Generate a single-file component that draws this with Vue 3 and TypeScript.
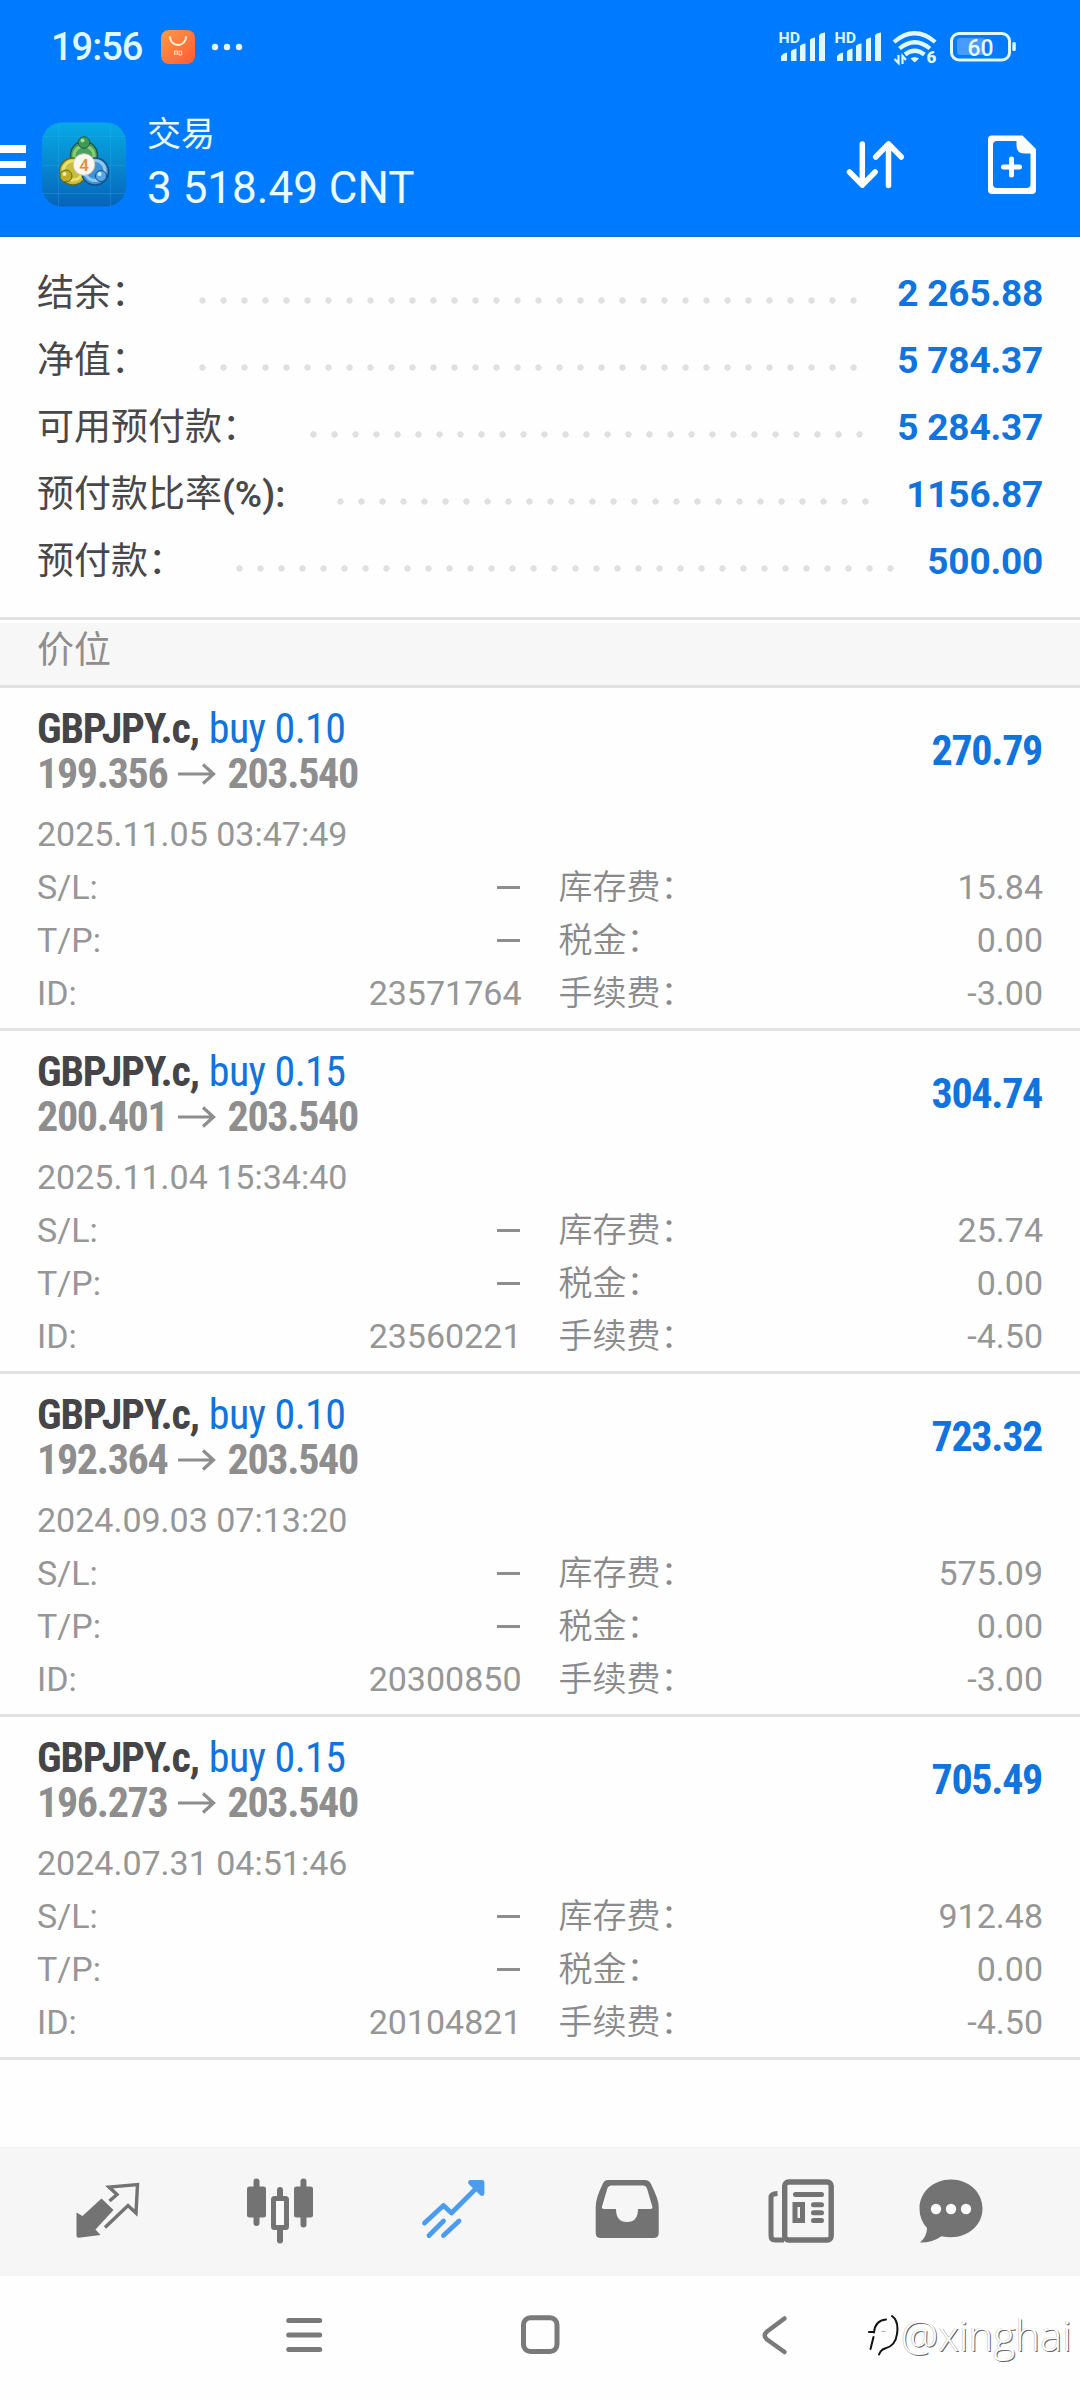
<script setup lang="ts">
interface SummaryRow {
  label: string
  suffix?: string
  value: string
  dots: number
  gap: number
}

interface Position {
  id: string
  volume: string
  open: string
  current: string
  profit: string
  time: string
  swap: string
  tax: string
  fee: string
}

const symbol = 'GBPJPY.c,'

// gap: width of the value column after the leader dots
const summary: SummaryRow[] = [
  { label: '结余：', value: '2 265.88', dots: 32, gap: 179 },
  { label: '净值：', value: '5 784.37', dots: 32, gap: 179 },
  { label: '可用预付款：', value: '5 284.37', dots: 27, gap: 173 },
  { label: '预付款比率', suffix: '(%):', value: '1156.87', dots: 26, gap: 167 },
  { label: '预付款：', value: '500.00', dots: 32, gap: 142 },
]

const positions: Position[] = [
  { id: '23571764', volume: '0.10', open: '199.356', current: '203.540', profit: '270.79', time: '2025.11.05 03:47:49', swap: '15.84', tax: '0.00', fee: '-3.00' },
  { id: '23560221', volume: '0.15', open: '200.401', current: '203.540', profit: '304.74', time: '2025.11.04 15:34:40', swap: '25.74', tax: '0.00', fee: '-4.50' },
  { id: '20300850', volume: '0.10', open: '192.364', current: '203.540', profit: '723.32', time: '2024.09.03 07:13:20', swap: '575.09', tax: '0.00', fee: '-3.00' },
  { id: '20104821', volume: '0.15', open: '196.273', current: '203.540', profit: '705.49', time: '2024.07.31 04:51:46', swap: '912.48', tax: '0.00', fee: '-4.50' },
]
</script>

<template>
  <div class="screen">
    <header class="header">
      <div class="status">
        <span class="clock">19:56</span>
        <svg class="shop" width="34" height="34" viewBox="0 0 34 34">
          <defs>
            <linearGradient id="shopFill" x1="0" y1="0" x2="1" y2="1">
              <stop offset="0" stop-color="#ff9a45" />
              <stop offset="1" stop-color="#ff5a36" />
            </linearGradient>
          </defs>
          <rect width="34" height="34" rx="8" fill="url(#shopFill)" />
          <path d="M9 7a8 8 0 0 0 16 0" fill="none" stroke="#fff0dc" stroke-width="2" stroke-linecap="round" />
          <path d="M13.500 25v-4h3v4M18 21h2.600v4H18zM15 22.500v2.500" fill="none" stroke="#ffd9c4" stroke-width="1" />
        </svg>
        <svg class="more" width="32" height="10" viewBox="0 0 32 10" fill="#dff8ff">
          <circle cx="4" cy="5" r="3.200" /><circle cx="16" cy="5" r="3.200" /><circle cx="28" cy="5" r="3.200" />
        </svg>
        <div class="radio">
          <svg v-for="n in 2" :key="n" class="signal" width="56" height="34" viewBox="778 30 56 34" fill="#dff8ff">
            <text x="778.500" y="43" font-size="15" font-weight="700" textLength="21.500" lengthAdjust="spacingAndGlyphs">HD</text>
            <path d="M781 61v-4.500q1-3 6-4v8.500zM791 61V51.500q1-2 5.500-3V61zM800 61V46q1-2 5.500-2.500V61zM810 61V40q1-2 5-2.500V61zM819 61V35.500q1-2.500 6-3V61z" />
          </svg>
          <svg class="wifi" width="48" height="40" viewBox="892 27 48 40" fill="none" stroke="#dff8ff" stroke-width="4.200">
            <path d="M894 42q20.600-17.500 41.200 0" />
            <path d="M899.500 48.500q15.200-12.500 30.400 0" />
            <path d="M905 54.500q9.700-7.500 19.400 0" />
            <path d="M910.500 58.500q4.200-3 8.400 0l-4.200 4z" fill="#dff8ff" stroke="none" />
            <path d="M898.500 55v8l-4-4M902.500 64v-8l3.500 4" stroke-width="2.200" />
            <text x="926.500" y="63" font-size="17" font-weight="900" fill="#dff8ff" stroke="none">6</text>
          </svg>
          <svg class="battery" width="68" height="32" viewBox="949 31 68 32">
            <rect x="957" y="38" width="28" height="17" rx="3" fill="#489cff" />
            <rect x="951.500" y="33.500" width="58" height="26.500" rx="7.500" fill="none" stroke="#dff8ff" stroke-width="3" />
            <rect x="1012.300" y="42" width="3.500" height="9" rx="1.500" fill="#dff8ff" />
            <text x="980.500" y="55.500" text-anchor="middle" font-size="24" font-weight="500" textLength="26" lengthAdjust="spacingAndGlyphs" fill="#eafaff">60</text>
          </svg>
        </div>
      </div>

      <div class="appbar">
        <div class="burger"><i /><i /><i /></div>
        <svg class="logo" width="86" height="86" viewBox="0 0 86 86">
          <defs>
            <linearGradient id="tile" x1="0" y1="0" x2="0" y2="1">
              <stop offset="0" stop-color="#06a9e6" />
              <stop offset="0.5" stop-color="#0788cf" />
              <stop offset="1" stop-color="#0763ba" />
            </linearGradient>
          </defs>
          <rect x="1" y="0.500" width="84" height="84" rx="20" fill="url(#tile)" />
          <path d="M1 14.500h84M1 43.500h84M1 71.500h84M17.500 1v84M69.500 1v84" stroke="#35b0e0" stroke-opacity="0.300" fill="none" />
          <circle cx="43" cy="33" r="13.500" fill="#4aa060" stroke="#1b5b4a" stroke-width="1.500" />
          <circle cx="43" cy="34" r="10" fill="none" stroke="#8ccb70" stroke-width="3" />
          <circle cx="32" cy="49.500" r="13.500" fill="#c9bd3c" stroke="#5c6a2a" stroke-width="1.500" />
          <circle cx="32" cy="48.500" r="9.500" fill="none" stroke="#eadf6a" stroke-width="3" />
          <circle cx="54" cy="49.500" r="13.500" fill="#3f92d6" stroke="#12508c" stroke-width="1.500" />
          <circle cx="54" cy="48.500" r="10" fill="none" stroke="#8ec8ef" stroke-width="3" />
          <circle cx="43" cy="20.500" r="5.800" fill="#3d9a52" stroke="#1b5b4a" />
          <circle cx="41.500" cy="18.500" r="2" fill="#a3dca0" />
          <circle cx="25" cy="54" r="6" fill="#c2ad25" stroke="#5c6a2a" />
          <circle cx="23.500" cy="52" r="2" fill="#f3edae" />
          <circle cx="60" cy="54" r="5.500" fill="#58a8e6" stroke="#12508c" />
          <circle cx="58.500" cy="52" r="2" fill="#d6efff" />
          <circle cx="43" cy="42.500" r="10.800" fill="#fbf7ef" stroke="#c5c4b6" />
          <text x="43" y="48.500" text-anchor="middle" font-size="17" font-weight="500" fill="#ee8a35">4</text>
        </svg>
        <div class="heading">
          <div class="title">交易</div>
          <div class="equity">3 518.49 CNT</div>
        </div>
        <svg class="sort" width="62" height="52" viewBox="844 138 62 52" fill="none" stroke="#fff" stroke-width="5.500" stroke-linecap="round" stroke-linejoin="round">
          <path d="M862.300 143v41M849.500 171l12.800 13.200 12.800-13.200" />
          <path d="M888.500 184.500v-41.500M875.700 156l12.800-13.200 12.800 13.200" />
        </svg>
        <svg class="doc" width="50" height="60" viewBox="987 134 50 60">
          <path fill="#fff" fill-rule="evenodd" d="M992 134.500h30.500l13.500 13.500v41q0 4-4 4h-40q-4 0-4-4v-50.500q0-4 4-4zM997 140q-4 0-4 4v39q0 4 4 4h29.500q4 0 4-4v-30.500h-6q-8 0-8-8V140z" />
          <path d="M1011.500 158v16M1003.500 166h16" stroke="#fff" stroke-width="5" stroke-linecap="round" />
        </svg>
      </div>
    </header>

    <section class="summary">
      <div v-for="row in summary" :key="row.label" class="sum-row">
        <span class="sum-label">{{ row.label }}<b v-if="row.suffix">{{ row.suffix }}</b></span>
        <span class="leader" :style="{ width: row.dots * 21 + 'px' }" />
        <span class="sum-value" :style="{ width: row.gap + 'px' }">{{ row.value }}</span>
      </div>
    </section>

    <div class="section-title"><span>价位</span></div>

    <article v-for="p in positions" :key="p.id" class="position">
      <div class="top">
        <div>
          <div class="name"><b>{{ symbol }}</b><span class="side">buy {{ p.volume }}</span></div>
          <div class="prices">
            <span>{{ p.open }}</span>
            <svg width="38" height="24" viewBox="0 0 38 24" fill="none" stroke="#8e8e8e" stroke-width="3.200">
              <path d="M0 12h36M25 2.500L35.500 12 25 21.500" />
            </svg>
            <span>{{ p.current }}</span>
          </div>
        </div>
        <div class="profit">{{ p.profit }}</div>
      </div>
      <div class="time">{{ p.time }}</div>
      <div class="details">
        <div><span>S/L:</span><i class="dash" /></div>
        <div><span class="cjk">库存费：</span><span>{{ p.swap }}</span></div>
        <div><span>T/P:</span><i class="dash" /></div>
        <div><span class="cjk">税金：</span><span>{{ p.tax }}</span></div>
        <div><span>ID:</span><span>{{ p.id }}</span></div>
        <div><span class="cjk">手续费：</span><span>{{ p.fee }}</span></div>
      </div>
    </article>

    <div class="spacer" />

    <nav class="tabs">
      <svg viewBox="75 2179 66 66" fill="#737373">
        <path d="M76.500 2213.500l6 3.500 19-17.500 12 11.500-18 19.500 5 5.500-22 2.800q-2 0-2-2z" />
        <path d="M109.500 2202l7.500-6.500-8-7.500 28.500-2.500-1.500 28.500-8-7.500-23 22" fill="none" stroke="#737373" stroke-width="3.400" />
      </svg>
      <svg viewBox="247 2178 66 66" fill="#737373">
        <rect x="247" y="2186.500" width="19" height="31" rx="2.500" /><rect x="253.500" y="2178.500" width="6" height="47.500" rx="3" />
        <rect x="294" y="2186.500" width="19" height="31" rx="2.500" /><rect x="300.500" y="2178.500" width="6" height="49" rx="3" />
        <rect x="277" y="2187" width="6" height="12" rx="3" /><rect x="277" y="2228" width="6" height="15.500" rx="3" />
        <rect x="273.500" y="2198.500" width="13" height="29" rx="1" fill="#f9f9f9" stroke="#737373" stroke-width="5" />
      </svg>
      <svg viewBox="420 2179 66 66" fill="none" stroke="#4b9bee" stroke-width="4.800" stroke-linecap="round" stroke-linejoin="round">
        <path d="M424.500 2224l19-17.500 8 7.500 29-29" />
        <path d="M470.500 2183.500h11.500v11z" fill="#4b9bee" />
        <path d="M429 2236.500l14.500-14.500M443.500 2236.500l15.500-14.500" />
      </svg>
      <svg viewBox="594 2179 66 66" fill="#737373">
        <path fill-rule="evenodd" d="M608 2181h37q4 0 6 4 8 16 7.700 23v26q0 5-5 5h-53q-5 0-5-5v-26q0-9 7-23 1.500-4 5.300-4zM611 2186.500q-2.500 0-3.500 2.500l-5.500 18.500q-.5 2.500 2 2.500h12q0 13 11 13t11-13h12q3 0 2.300-2.500l-5.300-18q-1-3-4-3z" />
      </svg>
      <svg viewBox="768 2177 66 66" fill="none" stroke="#737373" stroke-width="5.400">
        <rect x="784.700" y="2181" width="46.500" height="58" rx="4" />
        <path d="M784 2239h-9q-4 0-4-4.500v-38q0-4 6.500-4" stroke-width="5" />
        <path d="M795.500 2193.500h26M813.500 2203.800h8M813.500 2211.800h8M813.500 2219.500h8" stroke-width="5" stroke-linecap="round" />
        <rect x="795" y="2203.500" width="7.500" height="16" stroke-width="5" />
      </svg>
      <svg viewBox="918 2177 66 66">
        <path d="M951 2178.500c17.500 0 31.500 12.500 31.500 29s-14 28.700-31.500 28.700q-5 0-9.500-1-9 6.500-21.500 6.300 7-6 7-14.500-7.500-8-7.500-19.500c0-16.500 14-29 31.500-29z" fill="#737373" />
        <g fill="#fbfbfb"><circle cx="936" cy="2208" r="5.200" /><circle cx="951" cy="2208" r="5.200" /><circle cx="966" cy="2208" r="5.200" /></g>
      </svg>
    </nav>

    <footer class="sysnav">
      <svg width="38" height="38" viewBox="285 2316 38 38" stroke="#7a7a7a" stroke-width="5" stroke-linecap="round">
        <path d="M288.700 2320.500h31M288.700 2335h31M288.700 2349.500h31" />
      </svg>
      <svg width="40" height="40" viewBox="520 2315 40 40">
        <rect x="523.500" y="2317.700" width="33.500" height="33.800" rx="7" fill="none" stroke="#7a7a7a" stroke-width="5" />
      </svg>
      <svg class="back" width="28" height="42" viewBox="761 2314 28 42" fill="none" stroke="#7a7a7a" stroke-width="4.500" stroke-linecap="round" stroke-linejoin="round">
        <path d="M784.500 2318.500l-17.500 13q-4.500 4 0 8l17.500 12.500" />
      </svg>
      <div class="mark">
        <svg width="34" height="46" viewBox="866 2320 34 46" fill="none" stroke="#111" stroke-width="2" stroke-linecap="round">
          <path d="M886 2327.500q-11 1-12 13M869 2340h4.500M873.500 2345l-3 12" />
          <path d="M892 2324q7 5 5 18-1.500 12-12 14.500-4 1-6 6" />
          <path d="M882 2339.500h3" stroke="#aaa" stroke-width="1" />
        </svg>
        <span>@xinghai</span>
      </div>
    </footer>
  </div>
</template>

<style>
body {
  margin: 0;
  background: #fff;
}
</style>

<style scoped>
.screen {
  width: 1080px;
  height: 2400px;
  display: flex;
  flex-direction: column;
  overflow: hidden;
  background: #fefefe;
  color: #8e8e8e;
  font-family: Roboto, "Noto Sans CJK SC", sans-serif;
}
svg {
  display: block;
  flex: none;
}
.header {
  height: 235px;
  background: #007aff;
  border-bottom: 2px solid #1a6fc0;
  color: #eafaff;
}
.status {
  height: 94px;
  display: flex;
  align-items: center;
  padding: 0 63px 0 51px;
}
.clock {
  width: 110px;
  font-size: 38px;
  font-weight: 500;
  line-height: 94px;
  letter-spacing: -1px;
  color: #dff8ff;
}
.more {
  margin-left: 16px;
}
.radio {
  margin-left: auto;
  display: flex;
  align-items: center;
}
.wifi {
  margin-left: 2px;
}
.battery {
  margin-left: 9px;
}
.appbar {
  height: 141px;
  display: flex;
  align-items: center;
}
.burger {
  width: 41px;
  display: grid;
  gap: 8px;
}
.burger i {
  width: 26px;
  height: 7.500px;
  background: #fff;
}
.heading {
  margin-left: 20px;
  width: 697px;
}
.title {
  font-size: 34px;
  line-height: 46px;
}
.equity {
  font-size: 44px;
  line-height: 62px;
}
.doc {
  margin-left: 81px;
}
.summary {
  height: 357px;
  padding: 23px 37px 0;
}
.sum-row {
  display: flex;
  height: 67px;
  line-height: 67px;
  font-size: 37px;
  color: #48484a;
}
.sum-label {
  flex: 1;
  white-space: nowrap;
}
.sum-label b {
  font-weight: 600;
}
.leader {
  background: radial-gradient(circle at center, #e0e0e0 0 2.800px, transparent 3.600px) 0 30px / 21px 21px repeat-x;
}
.sum-value {
  text-align: right;
  font-weight: 700;
  letter-spacing: -0.200px;
  color: #1173dc;
  white-space: nowrap;
}
.section-title {
  height: 62px;
  padding: 3px 37px 0;
  border-top: 3px solid #e2e2e2;
  border-bottom: 3px solid #e2e2e2;
  box-shadow: inset 0 3px #fefefe;
  background: #f7f7f7;
  font-size: 37px;
  line-height: 55px;
}
.section-title,
.position {
  box-sizing: content-box;
}
.section-title {
  height: 62px;
}
.position {
  height: 340px;
  border-bottom: 3px solid #e2e2e2;
  display: flow-root;
  padding: 0 37px;
}
.top {
  margin-top: 18px;
  height: 90px;
  display: flex;
  align-items: center;
  justify-content: space-between;
  font-family: "Roboto Condensed", Roboto, sans-serif;
  font-stretch: 75%;
  font-size: 42px;
  line-height: 45px;
}
.name b {
  color: #454548;
  letter-spacing: -1.200px;
  margin-right: 10px;
}
.side {
  color: #1173dc;
  letter-spacing: -0.600px;
}
.prices {
  display: flex;
  align-items: center;
  gap: 11px;
  font-weight: 700;
  letter-spacing: -1.300px;
}
.profit {
  margin-right: 1px;
  margin-bottom: 2px;
  font-weight: 700;
  letter-spacing: -1.300px;
  color: #1173dc;
}
.time,
.details {
  font-size: 34px;
  line-height: 53px;
  font-weight: 400;
  color: #969696;
}
.time {
  margin-top: 12px;
}
.details {
  display: grid;
  grid-template-columns: 1fr 1fr;
  column-gap: 37px;
}
.details div {
  height: 53px;
  display: flex;
  justify-content: space-between;
  align-items: center;
}
.cjk {
  font-weight: 350;
  color: #8a8a8a;
}
.dash {
  width: 23px;
  height: 2.500px;
  margin-right: 2px;
  background: #8e8e8e;
}
.spacer {
  flex: 1;
}
.tabs {
  height: 129px;
  box-sizing: border-box;
  border-top: 1px solid #f2f2f2;
  background: #f6f6f6;
  display: grid;
  grid-template-columns: 172px 173px 174px 174px 150px 66px;
  align-items: center;
  padding: 0 0 2px 75px;
}
.tabs svg {
  width: 66px;
  height: 66px;
}
.sysnav {
  height: 124px;
  display: flex;
  align-items: center;
  padding: 0 0 6px 285px;
  box-sizing: border-box;
  gap: 197px;
}
.back {
  margin-left: 4px;
}
.mark {
  display: flex;
  align-items: center;
  margin-left: -120px;
}
.mark span {
  margin-left: 1px;
  font-family: "Open Sans", "Noto Sans", sans-serif;
  font-size: 42px;
  line-height: 46px;
  font-weight: 300;
  color: #fff;
  text-shadow: 1px 1px 0 #666, -0.500px -0.500px 0 #bbb;
}
</style>
